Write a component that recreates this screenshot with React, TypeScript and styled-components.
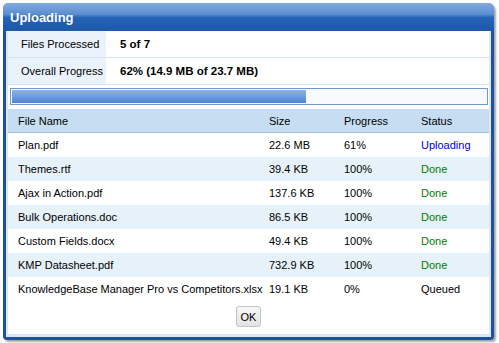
import React from "react";
import styled, { createGlobalStyle } from "styled-components";

const GlobalStyle = createGlobalStyle`
  html, body {
    margin: 0;
    padding: 0;
    background: #ffffff;
  }
  body {
    font-family: Tahoma, "Liberation Sans", Arial, sans-serif;
    font-size: 11px;
    color: #000;
  }
`;

type FileRow = {
  name: string;
  size: string;
  progress: string;
  status: "Uploading" | "Done" | "Queued";
};

const files: FileRow[] = [
  { name: "Plan.pdf", size: "22.6 MB", progress: "61%", status: "Uploading" },
  { name: "Themes.rtf", size: "39.4 KB", progress: "100%", status: "Done" },
  { name: "Ajax in Action.pdf", size: "137.6 KB", progress: "100%", status: "Done" },
  { name: "Bulk Operations.doc", size: "86.5 KB", progress: "100%", status: "Done" },
  { name: "Custom Fields.docx", size: "49.4 KB", progress: "100%", status: "Done" },
  { name: "KMP Datasheet.pdf", size: "732.9 KB", progress: "100%", status: "Done" },
  {
    name: "KnowledgeBase Manager Pro vs Competitors.xlsx",
    size: "19.1 KB",
    progress: "0%",
    status: "Queued",
  },
];

const Page = styled.div`
  padding: 3px 5px 6px 3px;
`;

const Window = styled.div`
  width: 491px;
  box-sizing: border-box;
  border-radius: 6px 6px 4px 4px;
  background: #1d4fa3;
  padding: 0 3px 3px 3px;
  box-shadow: 2px 2px 2px rgba(0, 0, 0, 0.35);
`;

const TitleBar = styled.div`
  height: 28px;
  display: flex;
  align-items: center;
  padding-left: 7px;
  margin: 0 -3px;
  border-radius: 5px 5px 0 0;
  background: linear-gradient(#82aade 0%, #5a8fd2 40%, #2463b6 52%, #1d58a9 100%);
  color: #fff;
  font-weight: bold;
  font-size: 13px;
`;

const Frame = styled.div`
  background: #dbe7f5;
  padding: 0 2px 3px 2px;
`;

const Body = styled.div`
  background: #fff;
  display: flex;
  flex-direction: column;
`;

const InfoRow = styled.div`
  display: flex;
  height: 26px;
  border-bottom: 1px solid #d3e1f0;
`;

const InfoLabel = styled.div`
  width: 98px;
  background: #eaf2fb;
  display: flex;
  align-items: center;
  padding-left: 13px;
  box-sizing: border-box;
`;

const InfoValue = styled.div`
  display: flex;
  align-items: center;
  padding-left: 14px;
  font-weight: bold;
  font-size: 11.5px;
`;

const ProgressOuter = styled.div`
  margin: 3px 1px 4px 2px;
  height: 17px;
  border: 1px solid #6d98d2;
  background: #f7fbff;
  box-sizing: border-box;
  padding: 1px;
`;

const ProgressFill = styled.div`
  height: 100%;
  background: linear-gradient(#8fb3e6 0%, #6f9be0 50%, #4e82d6 100%);
`;

const Grid = styled.div`
  display: flex;
  flex-direction: column;
`;

const GridRow = styled.div<{ $alt?: boolean; $header?: boolean }>`
  display: grid;
  grid-template-columns: 251px 75px 77px 1fr;
  height: ${(p) => (p.$header ? "23px" : "24px")};
  align-items: center;
  background: ${(p) => (p.$header ? "#c7ddf1" : p.$alt ? "#e6f1f9" : "#ffffff")};
  border-bottom: ${(p) => (p.$header ? "1px solid #a7bfd8" : "none")};
`;

const Cell = styled.div`
  padding-left: 10px;
  white-space: nowrap;
`;

const StatusCell = styled(Cell)<{ $status: string }>`
  color: ${(p) =>
    p.$status === "Uploading" ? "#0000ee" : p.$status === "Done" ? "#008000" : "#000"};
`;

const Footer = styled.div`
  display: flex;
  justify-content: center;
  padding: 5px 0 7px;
`;

const OkButton = styled.button`
  font-family: inherit;
  font-size: 11px;
  height: 21px;
  min-width: 24px;
  padding: 0 4px;
  border: 1px solid #c4c4c4;
  border-radius: 3px;
  background: linear-gradient(#f8f8f8, #e2e2e2);
  color: #000;
`;

export default function App() {
  const overall = 62;
  return (
    <>
      <GlobalStyle />
      <Page>
        <Window>
          <TitleBar>Uploading</TitleBar>
          <Frame>
            <Body>
              <InfoRow>
                <InfoLabel>Files Processed</InfoLabel>
                <InfoValue>5 of 7</InfoValue>
              </InfoRow>
              <InfoRow>
                <InfoLabel>Overall Progress</InfoLabel>
                <InfoValue>62% (14.9 MB of 23.7 MB)</InfoValue>
              </InfoRow>
              <ProgressOuter>
                <ProgressFill style={{ width: `${overall}%` }} />
              </ProgressOuter>
              <Grid>
                <GridRow $header>
                  <Cell>File Name</Cell>
                  <Cell>Size</Cell>
                  <Cell>Progress</Cell>
                  <Cell>Status</Cell>
                </GridRow>
                {files.map((f, i) => (
                  <GridRow key={f.name} $alt={i % 2 === 1}>
                    <Cell>{f.name}</Cell>
                    <Cell>{f.size}</Cell>
                    <Cell>{f.progress}</Cell>
                    <StatusCell $status={f.status}>{f.status}</StatusCell>
                  </GridRow>
                ))}
              </Grid>
              <Footer>
                <OkButton>OK</OkButton>
              </Footer>
            </Body>
          </Frame>
        </Window>
      </Page>
    </>
  );
}
